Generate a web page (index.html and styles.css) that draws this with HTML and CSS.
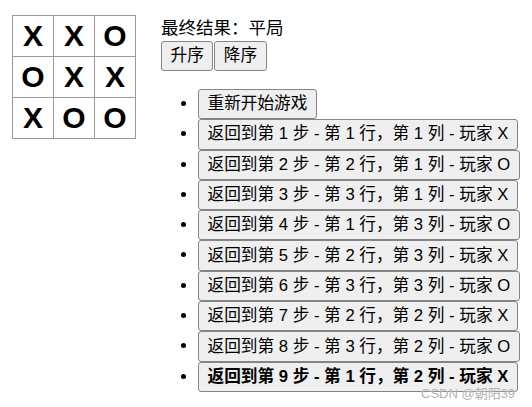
FILE: index.html
```html
<!DOCTYPE html>
<html lang="zh">
<head>
<meta charset="utf-8">
<title>井字棋</title>
<link rel="stylesheet" href="styles.css">
</head>
<body>
<div class="game">
  <div class="board">
    <button class="square">X</button>
    <button class="square">X</button>
    <button class="square">O</button>
    <button class="square">O</button>
    <button class="square">X</button>
    <button class="square">X</button>
    <button class="square">X</button>
    <button class="square">O</button>
    <button class="square">O</button>
  </div>
  <div class="game-info">
    <div class="status">最终结果：平局</div>
    <div class="sort">
      <button class="btn">升序</button><button class="btn">降序</button>
    </div>
    <ul class="moves">
      <li><button class="btn">重新开始游戏</button></li>
      <li><button class="btn">返回到第 1 步 - 第 1 行，第 1 列 - 玩家 X</button></li>
      <li><button class="btn">返回到第 2 步 - 第 2 行，第 1 列 - 玩家 O</button></li>
      <li><button class="btn">返回到第 3 步 - 第 3 行，第 1 列 - 玩家 X</button></li>
      <li><button class="btn">返回到第 4 步 - 第 1 行，第 3 列 - 玩家 O</button></li>
      <li><button class="btn">返回到第 5 步 - 第 2 行，第 3 列 - 玩家 X</button></li>
      <li><button class="btn">返回到第 6 步 - 第 3 行，第 3 列 - 玩家 O</button></li>
      <li><button class="btn">返回到第 7 步 - 第 2 行，第 2 列 - 玩家 X</button></li>
      <li><button class="btn">返回到第 8 步 - 第 3 行，第 2 列 - 玩家 O</button></li>
      <li><button class="btn current">返回到第 9 步 - 第 1 行，第 2 列 - 玩家 X</button></li>
    </ul>
  </div>
</div>
<div class="watermark">CSDN @朝阳39</div>
</body>
</html>
```

FILE: styles.css
```css
html, body {
  background: #ffffff;
}
body {
  margin: 15px 12px;
  font-family: "Liberation Sans", "Noto Sans CJK SC", sans-serif;
  font-size: 17.5px;
  color: #000;
}
.game {
  display: flex;
  flex-direction: row;
  align-items: flex-start;
}
.board {
  display: grid;
  grid-template-columns: repeat(3, 41px);
  grid-template-rows: repeat(3, 41px);
}
.square {
  width: 42px;
  height: 42px;
  margin: 0 -1px -1px 0;
  padding: 0;
  background: #fff;
  border: 1px solid #999;
  font-family: "Liberation Sans", sans-serif;
  font-size: 30px;
  font-weight: bold;
  line-height: 40px;
  text-align: center;
  color: #000;
}
.game-info {
  margin-left: 26px;
}
.status {
  line-height: 26px;
}
.sort {
  display: flex;
  gap: 1px;
}
.btn {
  font-family: "Liberation Sans", "Noto Sans CJK SC", sans-serif;
  font-size: 16.67px;
  line-height: 26px;
  height: 30px;
  padding: 0 8.5px;
  background: #efefef;
  border: 1px solid #858585;
  border-radius: 3px;
  color: #000;
  white-space: nowrap;
  vertical-align: top;
}
.moves {
  margin: 18px 0 0;
  padding-left: 37px;
  list-style: disc;
}
.moves li {
  font-size: 16.67px;
  line-height: 30.3px;
  height: 30.3px;
}
.moves .btn {
  height: 30.3px;
}
.current {
  font-weight: bold;
}
.watermark {
  position: absolute;
  left: 421px;
  top: 383px;
  font-family: "Liberation Sans", "Noto Sans CJK SC", sans-serif;
  font-size: 13px;
  color: rgba(150, 150, 150, 0.75);
  text-shadow: 0 0 1px #fff;
}
```
